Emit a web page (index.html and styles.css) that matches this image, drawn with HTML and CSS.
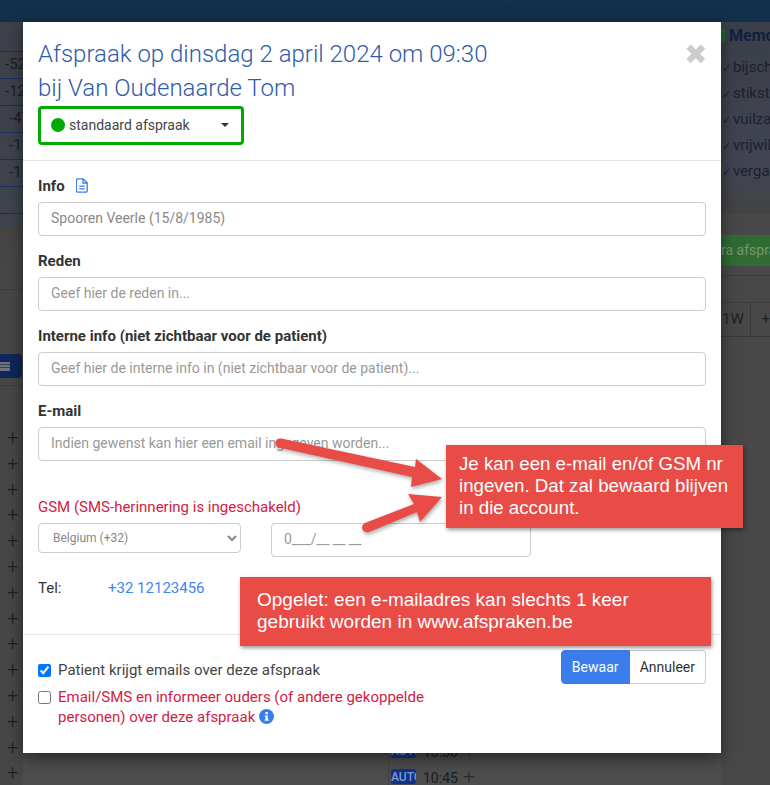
FILE: index.html
```html
<!DOCTYPE html>
<html lang="en">
	<head>
		<title>Afspraak</title>
		<meta charset="utf-8">
		<link rel="stylesheet" href="styles.css">
	</head>

	<body>
		<div class="page">
			<div class="topBar"></div>
			<div class="pageMain">
				<div class="leftCol">
					<div class="stats">
						<div class="statRow"></div>
						<div class="statRow">-52</div>
						<div class="statRow">-12</div>
						<div class="statRow statShort">-47</div>
						<div class="statRow statShort">-11</div>
						<div class="statRow statShort">-1</div>
						<div class="statRow"></div>
					</div>
					<div class="leftBand"></div>
					<div class="leftPill"><span class="pillIcon"></span></div>
					<div class="plusList">
						<div class="plusRow">+</div>
						<div class="plusRow">+</div>
						<div class="plusRow">+</div>
						<div class="plusRow">+</div>
						<div class="plusRow">+</div>
						<div class="plusRow">+</div>
						<div class="plusRow">+</div>
						<div class="plusRow">+</div>
						<div class="plusRow">+</div>
						<div class="plusRow">+</div>
						<div class="plusRow">+</div>
						<div class="plusRow">+</div>
						<div class="plusRow">+</div>
						<div class="plusRow">+</div>
					</div>
				</div>
				<div class="midCol">
					<div class="slotCol">
						<div class="slot"><span class="autoTag">AUTO</span>10:30 <span class="slotPlus">+</span></div>
						<div class="slot"><span class="autoTag">AUTO</span>10:45 <span class="slotPlus">+</span></div>
					</div>
				</div>
				<div class="rightCol">
					<div class="memo">
						<div class="memoTitle"><span class="memoMark"></span>Memo</div>
						<div class="memoItem"><span class="tick">&#10003;</span>bijsch</div>
						<div class="memoItem"><span class="tick">&#10003;</span>stikst</div>
						<div class="memoItem"><span class="tick">&#10003;</span>vuilza</div>
						<div class="memoItem"><span class="tick">&#10003;</span>vrijwil</div>
						<div class="memoItem"><span class="tick">&#10003;</span>verga</div>
					</div>
					<div class="greenBar">ra afspra</div>
					<div class="rightRows"></div>
					<div class="weekBtns"><span class="weekBtn">1W</span><span class="weekPlus">+</span></div>
				</div>
			</div>
		</div>

		<div class="modal">
			<div class="modalHeader">
				<button class="close" type="button">&#10006;</button>
				<h4 class="modalTitle">Afspraak op dinsdag 2 april 2024 om 09:30<br>bij Van Oudenaarde Tom</h4>
				<button class="typeSelect" type="button"><span class="typeDot"></span>standaard afspraak<span class="caret"></span></button>
			</div>
			<div class="modalBody">
				<div class="formGroup">
					<label>Info
						<svg class="docIcon" viewBox="0 0 12 15" width="12" height="15"><path d="M1.800 .8h5.400l4 4v8a1.400 1.400 0 0 1-1.400 1.400H1.800A1.400 1.400 0 0 1 .4 12.800V2.200A1.400 1.400 0 0 1 1.800 .8zM7 1v4h4M3.200 8.200h5.600M3.200 10.800h5.600" fill="none" stroke="#3b7ded" stroke-width="1.300"/></svg>
					</label>
					<input class="field fieldFilled" type="text" value="Spooren Veerle (15/8/1985)">
				</div>
				<div class="formGroup">
					<label>Reden</label>
					<input class="field" type="text" placeholder="Geef hier de reden in...">
				</div>
				<div class="formGroup">
					<label>Interne info (niet zichtbaar voor de patient)</label>
					<input class="field" type="text" placeholder="Geef hier de interne info in (niet zichtbaar voor de patient)...">
				</div>
				<div class="formGroup">
					<label>E-mail</label>
					<input class="field" type="text" placeholder="Indien gewenst kan hier een email ingegeven worden...">
				</div>
				<div class="gsmLabel">GSM (SMS-herinnering is ingeschakeld)</div>
				<div class="gsmRow">
					<select class="country"><option>Belgium (+32)</option></select>
					<input class="field gsmField" type="text" placeholder="0___/__ __ __">
				</div>
				<div class="telRow"><span class="telLabel">Tel:</span><a class="telLink">+32 12123456</a></div>
			</div>
			<div class="modalFooter">
				<div class="checks">
					<label class="check"><input type="checkbox" checked><span>Patient krijgt emails over deze afspraak</span></label>
					<label class="check checkRed"><input type="checkbox"><span>Email/SMS en informeer ouders (of andere gekoppelde personen) over deze afspraak
						<svg class="infoIcon" viewBox="0 0 14 14" width="15" height="15"><circle cx="7" cy="7" r="7" fill="#3b7ded"/><rect x="6" y="2.800" width="2.200" height="2.100" fill="#fff"/><path d="M5.300 6h2.900v3.900h.8v1.100H5.300v-1.100h.8V7.100h-.8z" fill="#fff"/></svg>
					</span></label>
				</div>
				<div class="btnGroup">
					<button class="btn btnPrimary" type="button">Bewaar</button>
					<button class="btn" type="button">Annuleer</button>
				</div>
			</div>
		</div>

		<svg class="arrows" width="770" height="785" viewBox="0 0 770 785">
			<path d="M281 438.500L415 467L416 459L442 479L411 487L412 477L279 447.500A4.500 4.500 0 0 1 281 438.500z"/>
			<path d="M365 523L414 504L408 494L442 497L420 522L417 512L369 532A4.900 4.900 0 0 1 365 523z"/>
		</svg>
		<div class="callout calloutGsm">Je kan een e-mail en/of GSM nr ingeven. Dat zal bewaard blijven in die account.</div>
		<div class="callout calloutMail">Opgelet: een e-mailadres kan slechts 1 keer gebruikt worden in www.afspraken.be</div>
	</body>
</html>
```

FILE: styles.css
```css
body {
	margin: 0px;
	width: 770px;
	height: 785px;
	overflow: hidden;
	background-color: #4d4d4d;
	font-family: Roboto, Arial, sans-serif;
	font-size: 15px;
	color: #333;
}

/* page behind the modal, colours already dimmed */
.page {
	display: flex;
	flex-direction: column;
	height: 785px;
}

.topBar {
	height: 22px;
	background-image: linear-gradient(#14304c, #12304a);
}

.pageMain {
	flex: 1;
	display: flex;
	min-height: 0;
}

.leftCol {
	width: 23px;
	background-color: #474747;
	color: #1d1f26;
}

.stats {
	height: 205px;
	background-image: linear-gradient(#3e4149, #40444e);
}

.statRow {
	height: 27px;
	box-sizing: border-box;
	padding: 2px 0px 0px 5px;
	border-bottom: 1px solid #1a2f5c;
	font-size: 15px;
	line-height: 20px;
	white-space: nowrap;
}

.statRow:first-child {
	height: 30px;
}

.statShort {
	padding-left: 9px;
}

.leftBand {
	height: 63px;
	box-sizing: border-box;
	background-image: linear-gradient(#46443f, #464646 40%, #474747);
	border-bottom: 1px solid #3e3e3e;
}

.leftPill {
	height: 16px;
	margin-top: 64px;
	margin-right: 1px;
	padding-top: 8px;
	background-color: #10275c;
	border-radius: 0px 4px 4px 0px;
}

.pillIcon {
	display: block;
	width: 10px;
	height: 9px;
	background-color: #6f7480;
	background-image: linear-gradient(transparent 2px, #3c4150 2px, #3c4150 3px, transparent 3px, transparent 5px, #3c4150 5px, #3c4150 6px, transparent 6px);
	border-radius: 1px;
}

.plusList {
	margin-top: 7px;
	padding-top: 38px;
	border-top: 1px solid #3e3e3e;
}

.plusRow {
	height: 25.800px;
	padding-left: 7px;
	font-size: 20px;
	font-weight: 300;
	line-height: 26px;
	color: #1f1f1f;
}

.midCol {
	flex: 1;
	padding-left: 365px;
}

.slotCol {
	height: 100%;
	padding-top: 721px;
	padding-left: 2px;
	box-sizing: border-box;
	border-left: 1px solid #424242;
}

.slot {
	height: 26px;
	font-size: 14px;
	line-height: 15px;
	color: #1c1c22;
	white-space: nowrap;
}

.autoTag {
	display: inline-block;
	width: 25px;
	height: 15px;
	margin-right: 7px;
	overflow: hidden;
	vertical-align: top;
	background-color: #10338a;
	border-radius: 2px;
	color: #7f9ad0;
	font-size: 12px;
	line-height: 16px;
	font-weight: 500;
}

.slotPlus {
	margin-left: 2px;
	font-size: 20px;
	font-weight: 300;
	color: #2b2b2b;
}

.rightCol {
	width: 49px;
	white-space: nowrap;
	background-color: #484848;
}

.memo {
	height: 191px;
	padding-top: 4px;
	box-sizing: border-box;
	background-image: linear-gradient(#3b3f49, #414552 80%, #434343);
	color: #1d1f2b;
}

.memoTitle {
	height: 28px;
	font-size: 16px;
	font-weight: 700;
	line-height: 20px;
	color: #10213f;
}

.memoMark {
	display: inline-block;
	width: 4px;
	height: 13px;
	margin-right: 4px;
	vertical-align: -1px;
	background-color: #1f6b2b;
}

.memoItem {
	height: 26px;
	padding-left: 1px;
	font-size: 15px;
	line-height: 26px;
}

.tick {
	display: inline-block;
	width: 11px;
	font-family: "DejaVu Sans", sans-serif;
	font-size: 11px;
}

.greenBar {
	height: 31px;
	margin-top: 22px;
	background-color: #2f6b33;
	color: #76996f;
	font-size: 14px;
	line-height: 31px;
}

.rightRows {
	height: 28px;
	margin-top: 9px;
	box-sizing: border-box;
	border-top: 1px solid #3e3e3e;
	border-bottom: 1px solid #3e3e3e;
}

.weekBtns {
	display: flex;
	height: 33px;
	border-bottom: 1px solid #3a3a3a;
	color: #1f2229;
	font-size: 15px;
	line-height: 32px;
}

.weekBtn {
	width: 32px;
	box-sizing: border-box;
	padding-left: 1px;
	border-right: 1px solid #3a3a3a;
}

.weekPlus {
	padding-left: 10px;
}

/* modal */
.modal {
	position: absolute;
	top: 22px;
	left: 23px;
	display: flex;
	flex-direction: column;
	width: 698px;
	height: 731px;
	background-color: #fff;
	box-shadow: 0 5px 15px rgba(0,0,0,0.5);
}

.modalHeader {
	height: 139px;
	padding: 15px 15px 0px 15px;
	box-sizing: border-box;
	border-bottom: 1px solid #e5e5e5;
}

.close {
	float: right;
	width: 22px;
	height: 24px;
	margin: 6px 0px 0px 0px;
	padding: 0px;
	border: none;
	background: none;
	color: #ccc;
	font-family: "DejaVu Sans", sans-serif;
	font-size: 28px;
	line-height: 24px;
}

.modalTitle {
	margin: 0px;
	color: #2f5ba8;
	font-size: 24px;
	font-weight: 300;
	line-height: 34px;
}

.typeSelect {
	display: flex;
	align-items: center;
	width: 206px;
	height: 39px;
	margin-top: 1px;
	padding: 0px 0px 2px 10px;
	box-sizing: border-box;
	border: 3px solid #0a0;
	border-radius: 4px;
	background-color: #fff;
	color: #444;
	font-family: Roboto, Arial, sans-serif;
	font-size: 14px;
}

.typeDot {
	width: 14px;
	height: 14px;
	margin-right: 4px;
	border-radius: 50%;
	background-color: #0a0;
}

.caret {
	width: 0px;
	height: 0px;
	margin-left: 31px;
	border-top: 4px solid #333;
	border-left: 4px solid transparent;
	border-right: 4px solid transparent;
}

.modalBody {
	height: 474px;
	padding: 15px 15px 0px 15px;
	box-sizing: border-box;
	border-bottom: 1px solid #e5e5e5;
}

.formGroup {
	margin-bottom: 15px;
}

.formGroup label {
	display: block;
	height: 20px;
	margin-bottom: 6px;
	font-weight: 700;
	line-height: 20px;
	color: #333;
}

.docIcon {
	margin-left: 8px;
	vertical-align: -2px;
}

.field {
	display: block;
	width: 100%;
	height: 34px;
	padding: 0px 12px 2px 12px;
	box-sizing: border-box;
	border: 1px solid #ccc;
	border-radius: 4px;
	background-color: #fff;
	color: #555;
	font-family: Roboto, Arial, sans-serif;
	font-size: 14px;
}

.field::placeholder {
	color: #999;
}

.fieldFilled {
	color: #888;
}

.gsmLabel {
	height: 20px;
	margin-top: 36px;
	margin-bottom: 6px;
	color: #d2213f;
	line-height: 20px;
}

.gsmRow {
	display: flex;
	align-items: flex-start;
	gap: 30px;
}

.country {
	width: 203px;
	height: 30px;
	padding-left: 10px;
	border: 1px solid #ccc;
	border-radius: 4px;
	background-color: #fff;
	color: #888;
	font-family: Roboto, Arial, sans-serif;
	font-size: 12px;
}

.gsmField {
	width: 260px;
}

.telRow {
	display: flex;
	margin-top: 21px;
	line-height: 20px;
}

.telLabel {
	width: 70px;
}

.telLink {
	color: #4285f4;
}

.modalFooter {
	display: flex;
	justify-content: space-between;
	padding: 15px 15px 0px 15px;
}

.checks {
	width: 400px;
	padding-top: 10px;
}

.check {
	display: flex;
	align-items: flex-start;
	margin-bottom: 7px;
	line-height: 20px;
	color: #444;
}

.check input {
	flex: none;
	width: 13px;
	height: 13px;
	margin: 4px 7px 0px 0px;
}

.checkRed {
	color: #d2213f;
}

.infoIcon {
	vertical-align: -2px;
}

.btnGroup {
	display: flex;
	height: 34px;
}

.btn {
	padding: 0px 10px;
	box-sizing: border-box;
	border: 1px solid #ccc;
	border-left: none;
	border-radius: 0px 4px 4px 0px;
	background-color: #fff;
	color: #333;
	font-family: Roboto, Arial, sans-serif;
	font-size: 14px;
}

.btnPrimary {
	width: 69px;
	border: 1px solid #3b7ded;
	border-radius: 4px 0px 0px 4px;
	background-color: #3b7ded;
	color: #fff;
}

/* annotations pasted on the screenshot */
.arrows {
	position: absolute;
	top: 0px;
	left: 0px;
	fill: #e94b47;
	filter: drop-shadow(1px 2px 2px rgba(0,0,0,0.35));
}

.callout {
	position: absolute;
	box-sizing: border-box;
	background-color: #e94b47;
	box-shadow: 1px 2px 4px rgba(0,0,0,0.4);
	color: #fff;
	font-family: "Liberation Sans", Arial, sans-serif;
	font-size: 18.700px;
	line-height: 22px;
}

.calloutGsm {
	top: 445px;
	left: 446px;
	width: 297px;
	height: 83px;
	padding: 8px 10px 0px 13px;
}

.calloutMail {
	top: 577px;
	left: 240px;
	width: 471px;
	height: 69px;
	padding: 12px 60px 0px 17px;
	font-size: 19px;
}
```
